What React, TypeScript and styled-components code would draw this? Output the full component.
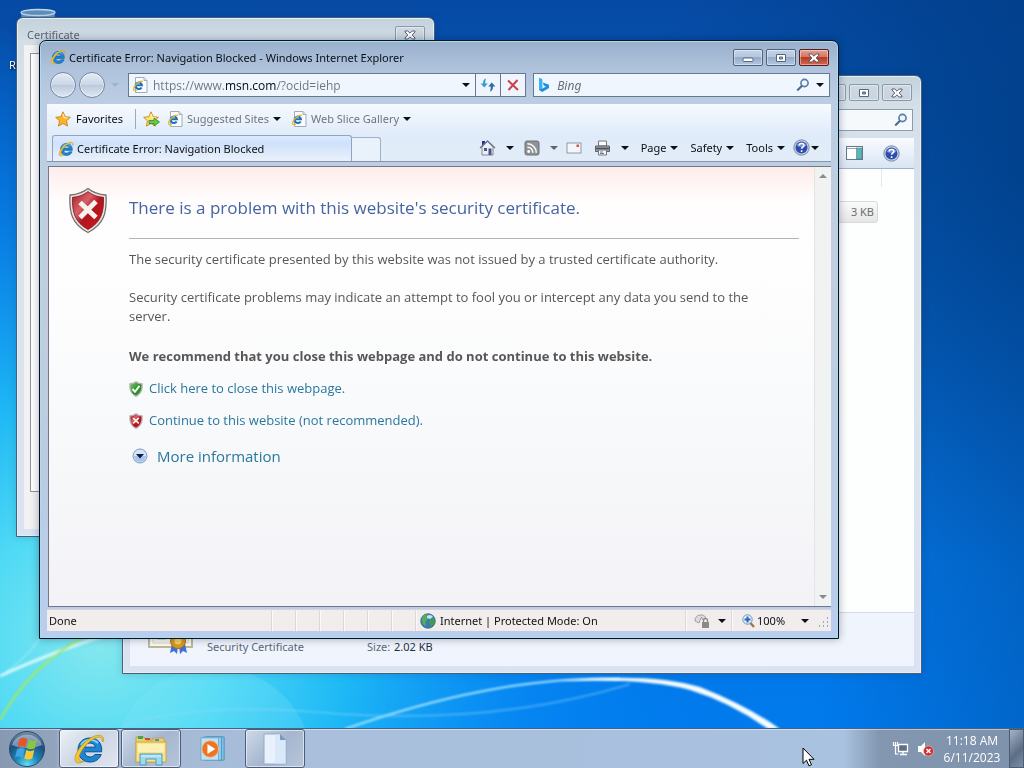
import React from "react";
import styled, { createGlobalStyle, css } from "styled-components";

const Global = createGlobalStyle`
  *, *::before, *::after { box-sizing: border-box; }
  html, body { margin: 0; padding: 0; }
  body { font-family: "Noto Sans", "Open Sans", sans-serif; font-size: 11px; line-height: 16px; color: #111; }
  button, input { font: inherit; color: inherit; }
  svg { display: block; flex: none; }
`;

/* ---------- desktop ---------- */

const Desktop = styled.div`
  position: relative;
  display: flex;
  flex-direction: column;
  min-height: 100vh;
  overflow: hidden;
  background: #0868d0;
`;

const WallpaperSvg = styled.svg`
  position: absolute;
  inset: 0;
  width: 100%;
  height: 100%;
`;

const Workspace = styled.main`
  position: relative;
  flex: 1;
`;

const DesktopIcon = styled.div`
  position: absolute;
  top: 8px;
  left: 1px;
  width: 74px;
  display: flex;
  flex-direction: column;
  align-items: center;
  gap: 1px;
  color: #fff;
  text-shadow: 1px 1px 2px #000;
`;

const reset = css`
  border: 0;
  padding: 0;
  background: none;
  cursor: default;
`;

/* ---------- window frames ---------- */

const Window = styled.section<{ $active?: boolean }>`
  position: absolute;
  display: flex;
  flex-direction: column;
  padding: 0 7px 7px;
  border: 1px solid ${(p) => (p.$active ? "#06131f" : "#46607c")};
  border-radius: 7px 7px 0 0;
  background: ${(p) =>
    p.$active
      ? "linear-gradient(#98afcc 0, #b0c3dc 28px, #bccce3 60px, #c3cfdf 200px, #bccbe0 70%, #b9cdee)"
      : "linear-gradient(#c3d2dc 0, #d3dee7 24px, #d6e1ea 60px, #d9e4ec 50%, #dbe2f2)"};
  box-shadow: inset 0 0 0 1px ${(p) => (p.$active ? "#a9dcf0" : "#e6eef4")},
    0 0 8px rgba(0, 20, 60, ${(p) => (p.$active ? 0.35 : 0.15)});
`;

const CertWindow = styled(Window)`
  top: 17px;
  right: 589px;
  bottom: 191px;
  left: 16px;
`;

const ExplorerWindow = styled(Window)`
  top: 75px;
  right: 102px;
  bottom: 54px;
  left: 122px;
`;

const BrowserWindow = styled(Window)`
  top: 40px;
  right: 185px;
  bottom: 89px;
  left: 39px;
`;

const TitleBar = styled.header<{ $height: number }>`
  display: flex;
  align-items: flex-start;
  gap: 3px;
  height: ${(p) => p.$height}px;
  padding: 8px 2px 0 3px;
`;

const Title = styled.h1<{ $dim?: boolean }>`
  flex: 1;
  margin: 0;
  font-size: 11px;
  font-weight: 400;
  line-height: 18px;
  color: ${(p) => (p.$dim ? "#5b656e" : "#0a0f18")};
`;

const FrameButton = styled.button<{ $kind?: "close" | "faded" }>`
  ${reset}
  display: flex;
  align-items: center;
  justify-content: center;
  width: 30px;
  height: 17px;
  border: 1px solid ${(p) => (p.$kind === "close" ? "#5a1a1e" : p.$kind === "faded" ? "#8a99a9" : "#50627c")};
  border-radius: 2px;
  background: ${(p) =>
    p.$kind === "close"
      ? "linear-gradient(#e3a193 0, #d4735f 48%, #b93a25 50%, #cf6c50)"
      : p.$kind === "faded"
        ? "linear-gradient(#ced9e2, #c8d4de)"
        : "linear-gradient(#c4d3e6 0, #b4c6dd 48%, #95abc8 50%, #b2c8e2)"};
  box-shadow: inset 0 0 0 1px rgba(255, 255, 255, 0.4);
`;

/* ---------- certificate window ---------- */

const CertBody = styled.div`
  flex: 1;
  display: flex;
  padding: 8px 6px 37px;
  background: #f1f2f1;
`;

const CertPanel = styled.div`
  flex: 1;
  border: 1px solid #8f959b;
  background: #fff;
`;

/* ---------- explorer window ---------- */

const SearchRow = styled.div`
  display: flex;
  justify-content: flex-end;
  height: 29px;
  padding-right: 1px;
`;

const ExplorerSearch = styled.label`
  display: flex;
  align-items: center;
  justify-content: flex-end;
  width: 190px;
  height: 22px;
  padding-right: 4px;
  border: 1px solid #8b9db1;
  background: #f5f9fc;
`;

const BareInput = styled.input`
  flex: 1;
  min-width: 0;
  height: 100%;
  padding: 0;
  border: 0;
  outline: 0;
  background: transparent;
`;

const ExplorerTools = styled.div`
  display: flex;
  align-items: center;
  justify-content: flex-end;
  gap: 20px;
  height: 31px;
  padding-right: 14px;
  border-bottom: 1px solid #9fb2cc;
  background: linear-gradient(#f8fbfe 0, #e8f0fa 50%, #d9e4f3);
`;

const FileList = styled.div`
  flex: 1;
  display: flex;
  flex-direction: column;
  align-items: flex-end;
  gap: 14px;
  padding-right: 32px;
  background: #fdfefe;
  border-bottom: 1px solid #d5dbe4;
`;

const ColumnEdge = styled.div`
  width: 1px;
  height: 18px;
  background: #e3e8ee;
`;

const FileSize = styled.div`
  width: 100px;
  height: 22px;
  margin-right: 4px;
  padding-right: 3px;
  border: 1px solid #d9d9d9;
  border-radius: 3px;
  background: linear-gradient(#fafafa, #e6e6e6);
  color: #6d6d6d;
  line-height: 20px;
  text-align: right;
`;

const DetailsPane = styled.footer`
  display: flex;
  align-items: flex-end;
  height: 53px;
  padding: 0 0 4px 18px;
  background: #f0f4fc;
  color: #5a6779;
`;

const DetailText = styled.div<{ $width?: number }>`
  width: ${(p) => (p.$width ? p.$width + "px" : "auto")};
  padding-bottom: 7px;
  white-space: nowrap;

  b {
    font-weight: 400;
    color: #1e2f45;
    margin-left: 1px;
  }
`;

/* ---------- browser ---------- */

const NavRow = styled.div`
  display: flex;
  align-items: center;
  height: 24px;
  margin-bottom: 7px;
  padding: 0 1px 0 3px;
`;

const RoundButton = styled.button`
  ${reset}
  width: 26px;
  height: 26px;
  margin-right: 3px;
  border: 1px solid #77869c;
  border-radius: 50%;
  background: linear-gradient(#e3ebf5 0, #cbd7e7 48%, #b9c8dc 50%, #dfe9f4);
  box-shadow: inset 0 0 0 1px rgba(255, 255, 255, 0.6);
`;

const HistoryButton = styled.button`
  ${reset}
  display: flex;
  width: 8px;
  margin: 0 9px 0 3px;
`;

const AddressBox = styled.div`
  flex: 349;
  display: flex;
  align-items: center;
  height: 24px;
  padding: 0 5px 0 3px;
  gap: 5px;
  border: 1px solid #647892;
  background: #f0f6fd;
`;

const AddressInput = styled(BareInput)`
  font-family: "Open Sans", "Noto Sans", sans-serif;
  font-size: 12px;
  background: linear-gradient(to right, #6c7480 71px, #05080c 71px, #05080c 124px, #6c7480 124px);
  -webkit-background-clip: text;
  background-clip: text;
  -webkit-text-fill-color: transparent;
`;

const NavButton = styled.button`
  ${reset}
  display: flex;
  align-items: center;
  justify-content: center;
  width: 25px;
  height: 24px;
  border: 1px solid #647892;
  border-left: 0;
  background: #eff5fc;
`;

const SearchBox = styled(AddressBox)`
  flex: 296;
  margin-left: 7px;
  gap: 6px;
`;

const SearchInput = styled(BareInput)`
  font-style: italic;
  font-size: 12px;

  &::placeholder {
    color: #6a6f78;
    opacity: 1;
  }
`;

const Chrome = styled.div`
  display: flex;
  flex-direction: column;
  background: linear-gradient(#f6faff 0, #dfebf9 32px, #e3edf9 100%);
`;

const FavoritesBar = styled.nav`
  display: flex;
  align-items: center;
  height: 30px;
  padding-left: 8px;
`;

const BarButton = styled.button<{ $muted?: boolean; $end?: number }>`
  ${reset}
  display: flex;
  align-items: center;
  gap: 4px;
  margin-right: ${(p) => p.$end ?? 10}px;
  color: ${(p) => (p.$muted ? "#71757b" : "#0b0e12")};
  white-space: nowrap;
`;

const Separator = styled.span`
  width: 1px;
  height: 20px;
  margin-right: 7px;
  background: #9fa9b5;
`;

const TabRow = styled.div`
  display: flex;
  align-items: flex-end;
  height: 28px;
  padding-left: 5px;
  border-bottom: 1px solid #8495ae;
`;

const Tab = styled.button`
  ${reset}
  display: flex;
  align-items: center;
  flex: 0 1 300px;
  gap: 3px;
  height: 26px;
  padding-left: 5px;
  border: 1px solid #8fa4c2;
  border-bottom: 0;
  border-radius: 3px 3px 0 0;
  background: linear-gradient(#dceafd, #cfe1fb 30%, #eaf2fc);
  text-align: left;
  white-space: nowrap;
`;

const NewTab = styled.button`
  ${reset}
  width: 29px;
  height: 24px;
  border: 1px solid #9fb0c8;
  border-bottom: 0;
  border-left: 0;
  border-radius: 0 3px 0 0;
  background: #e9f1fb;
`;

const CommandBar = styled.div`
  display: flex;
  align-items: center;
  justify-content: flex-end;
  flex: 1;
  align-self: center;
  padding-right: 12px;
`;

const Caret = styled.span<{ $color?: string }>`
  flex: none;
  border: 4px solid transparent;
  border-top-color: ${(p) => p.$color ?? "#0c1118"};
  border-bottom: 0;
`;

const IconCommand = styled(BarButton)`
  gap: 10px;
`;

const HelpCommand = styled(BarButton)`
  gap: 1px;
`;

const ViewFrame = styled.div`
  flex: 1;
  display: flex;
  min-height: 0;
  margin: 4px 0 0 1px;
  border: 1px solid #6f7a86;
  border-right: 0;
  background: #fff;
`;

const Page = styled.article`
  flex: 1;
  display: grid;
  grid-template-columns: 60px 1fr;
  align-content: start;
  padding: 20px 15px 0 20px;
  background: linear-gradient(#ffecec 0, #fffdfd 34px, #fefefe 100px, #f8f9fb 60%, #f3f3f7);
  color: #575757;
  font-family: "Open Sans", "Noto Sans", sans-serif;
  font-size: 13px;
  line-height: 19px;
`;

const Heading = styled.h2`
  margin: 0;
  padding: 7px 0 16px;
  border-bottom: 1px solid #b4b4b4;
  color: #4465a2;
  font-size: 17px;
  font-weight: 400;
  line-height: 28px;
`;

const Message = styled.div`
  grid-column: 2;
  padding: 11px 20px 0 0;
`;

const Paragraph = styled.p`
  margin: 0 0 19px;
`;

const Advice = styled.h3`
  margin: 0 0 13px;
  padding-top: 2px;
  font-size: 13px;
  line-height: 19px;
`;

const Choice = styled.a<{ $large?: boolean }>`
  display: flex;
  align-items: center;
  gap: ${(p) => (p.$large ? 9 : 6)}px;
  margin-bottom: 13px;
  padding-left: ${(p) => (p.$large ? 3 : 0)}px;
  color: #2a789e;
  font-size: ${(p) => (p.$large ? 15 : 13)}px;
  line-height: ${(p) => (p.$large ? 26 : 19)}px;
  text-decoration: none;
`;

const ScrollTrack = styled.div`
  display: flex;
  flex-direction: column;
  justify-content: space-between;
  align-items: center;
  width: 17px;
  padding: 7px 0;
  border-left: 1px solid #e3e3e3;
  background: #f1f2f2;
`;

const ScrollButton = styled.button<{ $down?: boolean }>`
  ${reset}
  width: 8px;
  height: 4px;
  border: 4px solid transparent;
  ${(p) => (p.$down ? "border-top-color: #8a8a8a; border-bottom: 0;" : "border-bottom-color: #8a8a8a; border-top: 0;")}
`;

const StatusBar = styled.footer`
  display: flex;
  height: 22px;
  margin-top: 2px;
  border-top: 1px solid #d5d5d5;
  background: #f0edec;
  line-height: 22px;
`;

const StatusText = styled.div`
  flex: 1;
  padding-left: 2px;
`;

const StatusCell = styled.div<{ $width: number }>`
  display: flex;
  align-items: center;
  gap: 4px;
  width: ${(p) => p.$width}px;
  padding-left: 4px;
  border-left: 1px solid #dcd8d6;
  box-shadow: inset 1px 0 0 #fbfafa;
`;

const StatusButton = styled(BarButton)`
  margin: 0;
  padding-left: 4px;
  gap: 8px;
`;

const ZoomButton = styled(BarButton)`
  flex: 1;
  gap: 2px;
  margin: 0 6px 0 0;
  padding-left: 6px;

  ${Caret} {
    margin-left: auto;
  }
`;

/* ---------- taskbar ---------- */

const Taskbar = styled.footer`
  position: relative;
  display: flex;
  align-items: stretch;
  height: 40px;
  border-top: 1px solid #3f6685;
  background: linear-gradient(
    to right,
    #8798b1 0,
    #93a4bd 56px,
    #a3b6d0 60px,
    #a9bfdc 320px,
    #a9c2df calc(100% - 180px),
    #8397b0 calc(100% - 145px),
    #7e92ab 100%
  );
  box-shadow: inset 0 1px 0 rgba(255, 255, 255, 0.45);
`;

const StartButton = styled.button`
  ${reset}
  width: 54px;
  margin-right: 5px;
  padding: 1px 0 0 8px;
`;

const TaskButton = styled.button<{ $state?: "front" | "open" }>`
  ${reset}
  display: flex;
  align-items: center;
  justify-content: center;
  width: 60px;
  margin-right: 2px;
  border: 1px solid ${(p) => (p.$state ? "#4b5d78" : "transparent")};
  border-radius: 3px;
  background: ${(p) =>
    p.$state === "front"
      ? "linear-gradient(135deg, #eef1f6, #cbd5e3 50%, #e2e7ef)"
      : p.$state === "open"
        ? "linear-gradient(135deg, #cfdaea, #a5b6ce 50%, #b6c5da)"
        : "none"};
  box-shadow: ${(p) => (p.$state ? "inset 0 0 0 1px rgba(255,255,255,0.55)" : "none")};
`;

const Tray = styled.div`
  display: flex;
  align-items: center;
  gap: 7px;
  margin-left: auto;
  color: #fff;
`;

const Clock = styled.time`
  display: block;
  width: 60px;
  font-family: "Open Sans", "Noto Sans", sans-serif;
  font-size: 12px;
  line-height: 17px;
  text-align: center;
`;

const ShowDesktop = styled.button`
  ${reset}
  align-self: stretch;
  width: 15px;
  border: 1px solid #4c5d72;
  background: linear-gradient(135deg, #a5b3c4, #5c6e86 60%, #7c8da3);
`;

const Pointer = styled.svg`
  position: absolute;
  bottom: 1px;
  right: 209px;
`;

/* ---------- drawings ---------- */

const Wallpaper = () => (
  <WallpaperSvg viewBox="0 0 1024 768" preserveAspectRatio="none" aria-hidden="true">
    <defs>
      <linearGradient id="base" x1="0" y1="0" x2="0" y2="1">
        <stop offset="0" stopColor="#064aa4" />
        <stop offset="0.25" stopColor="#0560c4" />
        <stop offset="0.6" stopColor="#0571dc" />
        <stop offset="1" stopColor="#007cf0" />
      </linearGradient>
      <radialGradient id="glow" gradientUnits="userSpaceOnUse" cx="100" cy="640" r="620">
        <stop offset="0" stopColor="#86e8ee" />
        <stop offset="0.2" stopColor="#50daf5" />
        <stop offset="0.4" stopColor="#20bcf6" stopOpacity="0.95" />
        <stop offset="0.7" stopColor="#0a90f8" stopOpacity="0.5" />
        <stop offset="1" stopColor="#0080f0" stopOpacity="0" />
      </radialGradient>
      <radialGradient id="shade" gradientUnits="userSpaceOnUse" cx="1060" cy="160" r="420">
        <stop offset="0" stopColor="#003a80" stopOpacity="0.75" />
        <stop offset="1" stopColor="#003a80" stopOpacity="0" />
      </radialGradient>
      <linearGradient id="edge" x1="0" y1="0" x2="1" y2="0">
        <stop offset="0.8" stopColor="#003a80" stopOpacity="0" />
        <stop offset="1" stopColor="#003a80" stopOpacity="0.32" />
      </linearGradient>
      <filter id="soft">
        <feGaussianBlur stdDeviation="1" />
      </filter>
    </defs>
    <rect width="1024" height="768" fill="url(#base)" />
    <rect width="1024" height="768" fill="url(#glow)" />
    <rect width="1024" height="768" fill="url(#shade)" />
    <rect width="1024" height="768" fill="url(#edge)" />
    <path d="M120 730 A100 100 0 0 1 306 730 Z" fill="#8ceaf8" opacity="0.2" />
    <g fill="none" filter="url(#soft)">
      <path d="M0 676 Q45 655 100 637" stroke="#d4f8fa" strokeWidth="3" />
      <path d="M0 676 Q25 660 40 638" stroke="#b8f4f8" strokeWidth="1" />
      <path d="M0 720 Q30 665 86 636" stroke="#a4e860" strokeWidth="2" />
      <path d="M120 728 Q190 700 340 714 Q500 724 630 684" stroke="#8fdcfc" strokeWidth="2" opacity="0.4" />
      <path d="M345 729 Q500 675 620 679" stroke="#a8e4fe" strokeWidth="2" />
    </g>
    <path d="M560 681 Q650 672 700 687 Q748 706 780 729 L768 729 Q730 702 690 690 Q650 678 560 681Z" fill="#f4fcff" filter="url(#soft)" />
  </WallpaperSvg>
);

const IELogo = ({ size = 16 }: { size?: number }) => (
  <svg width={size} height={size} viewBox="0 0 32 32" aria-hidden="true">
    <path
      d="M17 5C9.500 5 5 10 5 17s5 12 12 12c5.500 0 9.600-3 11.200-7.500h-6.400c-1 1.700-2.600 2.500-4.700 2.500-3.200 0-5.300-2-5.500-5.200h17C29.300 10.500 25 5 17 5zm-5.300 9.200C12.200 11.500 14.200 10 17 10c2.900 0 4.900 1.500 5.300 4.200z"
      fill="#1e86d0"
      stroke="#0b4f94"
      strokeWidth="1"
    />
    <path d="M8 12C11 6 20 5 25 10" fill="none" stroke="#7fd0f5" strokeWidth="2" />
    <path
      d="M30.500 8.500C31.500 2 26 .5 19 4.200 11 8.500 2.500 18 2 25.500 1.700 31 6.500 31 12 28c-4 1-6.500 0-6-3.500C6.800 18.500 13.500 10 20.500 6c5-3 9-2.500 8.500 2z"
      fill="#f6c62e"
      stroke="#b88a14"
      strokeWidth="0.6"
    />
  </svg>
);

const PageIcon = () => (
  <svg width="16" height="16" viewBox="0 0 16 16" aria-hidden="true">
    <path d="M3.500.5h8.500l3 3v12H3.500z" fill="#fdfdfd" stroke="#a3acb8" />
    <path d="M12 .5v3h3" fill="#dfe5ec" stroke="#a3acb8" />
    <path
      d="M9.600 10.400a3.200 3.200 0 1 1 .4-2.100H4.200"
      fill="none"
      stroke="#1d72be"
      strokeWidth="2"
    />
    <path d="M11 4.500C9 3 2.500 7.500 1.500 12c-.3 2 1.500 2.200 3.500 1.200" fill="none" stroke="#e8b92c" strokeWidth="1.200" />
  </svg>
);

const Star = ({ add }: { add?: boolean }) => (
  <svg width="17" height="16" viewBox="0 0 17 16" aria-hidden="true">
    <path
      d="M8 .8l2.200 4.900 5.200.6-3.900 3.500 1.100 5.300L8 12.500l-4.600 2.600 1.100-5.300L.6 6.300l5.200-.6z"
      fill={add ? "#ffe27a" : "#fbb52c"}
      stroke="#cc8411"
      strokeWidth="0.900"
      strokeLinejoin="round"
    />
    <path d="M8 3l1.200 3.600 3.300.4" fill="none" stroke="#fff1b8" strokeWidth="1.200" />
    {add && <path d="M6 9.500h5V7l5.500 4-5.500 4v-2.500H6z" fill="#6cc84a" stroke="#2f8a25" strokeWidth="0.800" />}
  </svg>
);

const Bing = () => (
  <svg width="14" height="16" viewBox="0 0 14 16" aria-hidden="true">
    <path d="M2 1l3.200 1.200v9.600L9 9.600 6.800 8.500 5.800 5.500 12 7.700v3.200L5.200 15 2 13z" fill="#1b8ee0" />
    <path d="M2 1l3.200 1.200v9.600L2 13z" fill="#38b2f0" />
  </svg>
);

const Refresh = () => (
  <svg width="16" height="14" viewBox="0 0 16 14" aria-hidden="true">
    <path d="M6 .5C3.800 1 3 2.800 3 5.500H.6l3.700 4 3.500-4H5.300c0-2 .1-3.500.7-5z" fill="#3b9dcb" />
    <path d="M10 13.500c2.200-.5 3-2.300 3-5h2.400l-3.700-4-3.500 4h2.500c0 2-.1 3.500-.7 5z" fill="#2d6aa8" />
  </svg>
);

const Stop = () => (
  <svg width="14" height="14" viewBox="0 0 14 14" aria-hidden="true">
    <path d="M2 2.500l10 9.500M11.500 2L2.500 12" stroke="#c8414c" strokeWidth="2" />
  </svg>
);

const Magnifier = () => (
  <svg width="14" height="14" viewBox="0 0 14 14" aria-hidden="true">
    <circle cx="8.500" cy="5" r="3.600" fill="#eef5fb" stroke="#547ca4" strokeWidth="1.600" />
    <path d="M6 7.800L1.200 12.500" stroke="#456a92" strokeWidth="2" />
  </svg>
);

const Glyph = ({ kind }: { kind: "min" | "max" | "close" }) => (
  <svg width="14" height="12" viewBox="0 0 14 12" aria-hidden="true">
    {kind === "min" && <rect x="2" y="6" width="10" height="3.500" rx="1" fill="#fff" stroke="#56667e" />}
    {kind === "max" && (
      <g fill="#fff" stroke="#56667e">
        <path d="M2.500 2.500h9v7h-9z" />
        <path d="M5.500 5h3v2h-3z" fill="#9fb2cc" />
      </g>
    )}
    {kind === "close" && (
      <path
        d="M2 2h2.800L7 4.200 9.200 2H12v1L9.200 6 12 9v1H9.200L7 7.800 4.800 10H2V9l2.800-3L2 3z"
        fill="#fff"
        stroke="#4a4f62"
        strokeWidth="0.900"
      />
    )}
  </svg>
);

const Home = () => (
  <svg width="17" height="17" viewBox="0 0 17 17" aria-hidden="true">
    <path d="M3 2h3v4L3 8z" fill="#2a2f9c" />
    <path d="M3 8l5.500-5.500L14 8v8H3z" fill="#eceff3" stroke="#68717e" strokeWidth="0.800" />
    <path d="M1 9l7.500-7L16 9" fill="none" stroke="#6f7a88" strokeWidth="1.500" />
    <path d="M5 9h3v3H5zM9.500 9.500h3V16h-3z" fill="#4c5788" />
  </svg>
);

const Feed = () => (
  <svg width="16" height="16" viewBox="0 0 16 16" aria-hidden="true">
    <rect x="1" y="1" width="14" height="14" rx="2" fill="#909396" stroke="#6d7073" />
    <circle cx="4.700" cy="11.500" r="1.400" fill="#fff" />
    <path d="M3.500 7.200a5.200 5.200 0 0 1 5.300 5.500M3.500 3.800a8.800 8.800 0 0 1 8.800 8.900" fill="none" stroke="#fff" strokeWidth="1.500" />
  </svg>
);

const Mail = () => (
  <svg width="16" height="16" viewBox="0 0 16 16" aria-hidden="true">
    <rect x="1" y="3" width="14" height="10" fill="#f5f6f9" stroke="#9098a8" />
    <path d="M10.500 4.500h2.500v2.500h-2.500z" fill="#d8504c" />
  </svg>
);

const Printer = () => (
  <svg width="17" height="16" viewBox="0 0 17 16" aria-hidden="true">
    <path d="M4.500 1h8v5h-8z" fill="#fafafa" stroke="#73777c" />
    <path d="M1.500 6h14v5.500h-14z" fill="#9a9fa5" stroke="#5e6368" />
    <path d="M2 8.500h13" stroke="#4b4f54" strokeWidth="1.500" />
    <path d="M4.500 10h8v5h-8z" fill="#f6f8fa" stroke="#73777c" />
    <path d="M6 12h3M6 13.500h4" stroke="#4a5a6c" strokeWidth="0.800" />
  </svg>
);

const Help = () => (
  <svg width="17" height="17" viewBox="0 0 17 17" aria-hidden="true">
    <circle cx="8.500" cy="8.500" r="7.700" fill="#c6cfe2" stroke="#7d8aa8" />
    <circle cx="8.500" cy="8.500" r="6" fill="#2c4cae" />
    <path d="M3.500 6.500a5.500 5 0 0 1 10 0c-3 2-7 2-10 0z" fill="#6f8bd4" />
    <path d="M6.200 6.500C6.300 3.800 11 3.900 10.900 6.400c-.1 1.700-2.300 1.600-2.300 3.300M8.600 11.300v1.600" fill="none" stroke="#fff" strokeWidth="1.600" />
  </svg>
);

const PreviewPane = () => (
  <svg width="17" height="15" viewBox="0 0 17 15" aria-hidden="true">
    <rect x="0.500" y="0.500" width="16" height="13" fill="#fff" stroke="#66788c" />
    <path d="M1 2.500h15" stroke="#93a4b5" />
    <rect x="10.500" y="2" width="5.500" height="11" fill="#5fb4b4" stroke="#4b7f8c" strokeWidth="0.600" />
  </svg>
);

const Shield = ({ ok, width, height }: { ok?: boolean; width: number; height: number }) => (
  <svg width={width} height={height} viewBox="0 0 38 46" aria-hidden="true">
    <defs>
      <linearGradient id={ok ? "sg" : "sr"} x1="0" y1="0" x2="1" y2="1">
        <stop offset="0" stopColor={ok ? "#7cc870" : "#a61c22"} />
        <stop offset="0.35" stopColor={ok ? "#46a53e" : "#d8606a"} />
        <stop offset="0.55" stopColor={ok ? "#1f8a20" : "#b01520"} />
        <stop offset="1" stopColor={ok ? "#3aa838" : "#d41616"} />
      </linearGradient>
    </defs>
    <path d="M19 1c6 5 11 6 18 6.500C38 25 35 37 19 45 3 37 0 25 1 7.500 8 7 13 6 19 1z" fill="#e9e5e4" stroke="#77706f" strokeWidth="1.300" />
    <path d="M19 4c5 4 10 5.200 15.500 5.800C35 25 32 35 19 42 6 35 3 25 3.500 9.800 9 9.200 14 8 19 4z" fill={ok ? "url(#sg)" : "url(#sr)"} stroke={ok ? "#2c6e2c" : "#7e1418"} strokeWidth="0.800" />
    {ok ? (
      <path d="M9 23l7 8 13-17" fill="none" stroke="#fff" strokeWidth="5.500" />
    ) : (
      <path d="M11 15l16 15M27 14L11 30" fill="none" stroke="#f7f3ec" strokeWidth="5" />
    )}
  </svg>
);

const Expand = () => (
  <svg width="16" height="16" viewBox="0 0 16 16" aria-hidden="true">
    <circle cx="8" cy="8" r="7" fill="#d5e4f6" stroke="#7f9cc4" />
    <path d="M2 8a6 6 0 0 0 12 0z" fill="#a9c6ea" />
    <path d="M4 6h8L8 10.500z" fill="#101c46" />
  </svg>
);

const Globe = () => (
  <svg width="16" height="16" viewBox="0 0 16 16" aria-hidden="true">
    <circle cx="8" cy="8" r="7.300" fill="#3c78bd" stroke="#3f5b78" strokeWidth="0.700" />
    <path d="M2 4c2-3 5-3 6-2.500L6.500 4 8 6 5.500 9 6 13c-3-1-5-4-4-9z" fill="#4fae57" />
    <path d="M10 6l4-1c1.500 4 0 7-3 9l-2-4z" fill="#3f9c4c" />
    <path d="M7 3c2-2 5-1 6 1L10 6 7 5z" fill="#bfe4f6" />
  </svg>
);

const Lock = () => (
  <svg width="16" height="16" viewBox="0 0 16 16" aria-hidden="true">
    <path d="M1 8a6 6 0 0 1 11-3.500L9 7 7.500 4 5 10z" fill="#dcdcdc" stroke="#8e8e8e" strokeWidth="0.800" />
    <rect x="8" y="9" width="7" height="6" fill="#8a8a8a" />
    <path d="M9.500 9V7.500a2 2 0 0 1 4 0V9" fill="none" stroke="#8a8a8a" strokeWidth="1.300" />
  </svg>
);

const Zoom = () => (
  <svg width="13" height="14" viewBox="0 0 13 14" aria-hidden="true">
    <path d="M8 8.500l4 4.500" stroke="#a0764a" strokeWidth="2.400" />
    <circle cx="5.500" cy="5.500" r="4.700" fill="#e6f0fb" stroke="#6d92c6" />
    <path d="M2.500 5.500h6M5.500 2.500v6" stroke="#2c64b8" strokeWidth="2" />
  </svg>
);

const Grip = () => (
  <svg width="12" height="14" viewBox="0 0 12 14" aria-hidden="true">
    <path d="M8 3h1v2H8zM8 7h1v2H8zM8 11h1v2H8zM4 7h1v2H4zM4 11h1v2H4zM0 11h1v2H0z" fill="#a4a8b4" />
  </svg>
);

const CertificateIcon = () => (
  <svg width="46" height="34" viewBox="0 0 46 34" aria-hidden="true">
    <rect x="1" y="1" width="43" height="25" fill="#fbfaf1" stroke="#bdb998" strokeWidth="2" />
    <path d="M5 5h35v17H5z" fill="none" stroke="#ddd9c0" />
    <path d="M9 15h13M9 18h9" stroke="#b9b9b9" />
    <path d="M24 23l-2 9 4-2 3 3 1-8zM37 23l2 9-4-2-3 3-1-8z" fill="#3f6fe0" />
    <circle cx="30" cy="20" r="7.500" fill="#d99a1c" stroke="#a8740c" />
    <circle cx="30" cy="20" r="3.500" fill="#f6cf5c" />
  </svg>
);

const RecycleBin = () => (
  <svg width="40" height="48" viewBox="0 0 40 48" aria-hidden="true">
    <path d="M3 5l4 40h26l4-40z" fill="#9fc0dc" opacity="0.6" />
    <ellipse cx="20" cy="4.500" rx="17" ry="3" fill="#5f92be" stroke="#c4d8ea" strokeWidth="1.300" />
  </svg>
);

const StartOrb = () => (
  <svg width="38" height="38" viewBox="0 0 38 38" aria-hidden="true">
    <defs>
      <radialGradient id="orb" cx="0.500" cy="0.950" r="0.950">
        <stop offset="0" stopColor="#5fe0f4" />
        <stop offset="0.35" stopColor="#1b86b8" />
        <stop offset="0.7" stopColor="#1f4d7c" />
        <stop offset="1" stopColor="#7a93ac" />
      </radialGradient>
    </defs>
    <circle cx="19" cy="19" r="17.500" fill="url(#orb)" stroke="#2a4b6c" />
    <path d="M4 15a15.500 14 0 0 1 30 0c-9 4-21 4-30 0z" fill="#dfe9f2" opacity="0.450" />
    <path d="M11.500 9q4-2.500 7.800 0l-2 8.500q-4-2.300-7.800 0z" fill="#e8552a" />
    <path d="M20.800 9.800q4 2.300 8 0l-2 8.400q-4 2.300-8 0z" fill="#8cc63e" />
    <path d="M9 19.200q4-2.300 7.800 0l-2 8.500q-4-2.300-7.800 0z" fill="#3fa3e4" />
    <path d="M18.300 20q4 2.300 8 0l-2 8.400q-4 2.300-8 0z" fill="#fbc92f" />
  </svg>
);

const Folder = () => (
  <svg width="34" height="34" viewBox="0 0 34 34" aria-hidden="true">
    <path d="M2 5h8l2 3h7V6h10l2 3v21H2z" fill="#ecd06c" stroke="#c0a24a" />
    <path d="M4 4h5v3H4z" fill="#3fa457" />
    <path d="M11 6h5v2h-5z" fill="#cf4a35" />
    <path d="M21 7h4v2h-4z" fill="#4e8fd2" />
    <path d="M2 10h30v20H2z" fill="#f8e28c" stroke="#c8a94a" />
    <path d="M4 12h26v8H4z" fill="#fcf0b4" />
    <path d="M6 33V22h22v11h-6v-6H12v6z" fill="#9ddaf2" stroke="#4b9cc4" />
    <path d="M7 24h20" stroke="#dff4fc" />
  </svg>
);

const MediaPlayer = () => (
  <svg width="26" height="26" viewBox="0 0 28 28" aria-hidden="true">
    <path d="M7 1h19v25H7z" fill="#7fc0e4" stroke="#4a91bd" />
    <path d="M4 1h19v25H4z" fill="#9ed2ef" stroke="#4a91bd" />
    <path d="M1 2h19v24H1z" fill="#c1e2f5" stroke="#6aa9cf" />
    <circle cx="11" cy="14" r="9" fill="#ec7424" stroke="#f7b98a" />
    <path d="M8 8.500l8.500 5.500L8 19.500z" fill="#fff" />
  </svg>
);

const Document = () => (
  <svg width="26" height="32" viewBox="0 0 26 32" aria-hidden="true">
    <path d="M2 1h16l6 6v24H2z" fill="#e9f2fc" stroke="#92aac6" />
    <path d="M13 1h5l6 6v24H13z" fill="#cfe2f7" opacity="0.600" />
    <path d="M18 1v6h6z" fill="#7c9abe" />
  </svg>
);

const Network = () => (
  <svg width="18" height="16" viewBox="0 0 18 16" aria-hidden="true">
    <path d="M6.500 3.500h9v7h-9z" fill="#5e6f86" stroke="#fff" strokeWidth="1.300" />
    <path d="M8 13.500h7M11 10v3" stroke="#fff" strokeWidth="1.300" />
    <path d="M1.500 1v3.500h4V1M3.500 1v3M3.500 5v8h3" fill="none" stroke="#fff" strokeWidth="1.200" />
  </svg>
);

const Muted = () => (
  <svg width="18" height="16" viewBox="0 0 18 16" aria-hidden="true">
    <path d="M1 5h3l4-4v14l-4-4H1z" fill="#fff" />
    <circle cx="11.500" cy="10" r="5" fill="#d02c2c" stroke="#f0b4b0" strokeWidth="0.700" />
    <path d="M9.500 8l4 4M13.500 8l-4 4" stroke="#fff" strokeWidth="1.600" />
  </svg>
);

/* ---------- screens ---------- */

const Certificate = () => (
  <CertWindow aria-label="Certificate">
    <TitleBar $height={27}>
      <Title $dim>Certificate</Title>
      <FrameButton $kind="faded" aria-label="Close"><Glyph kind="close" /></FrameButton>
    </TitleBar>
    <CertBody><CertPanel /></CertBody>
  </CertWindow>
);

const Explorer = () => (
  <ExplorerWindow aria-label="File explorer">
    <TitleBar $height={33}>
      <Title />
      <FrameButton $kind="faded" aria-label="Minimize"><Glyph kind="min" /></FrameButton>
      <FrameButton $kind="faded" aria-label="Maximize"><Glyph kind="max" /></FrameButton>
      <FrameButton $kind="faded" aria-label="Close"><Glyph kind="close" /></FrameButton>
    </TitleBar>
    <SearchRow>
      <ExplorerSearch>
        <BareInput aria-label="Search files" />
        <Magnifier />
      </ExplorerSearch>
    </SearchRow>
    <ExplorerTools><PreviewPane /><Help /></ExplorerTools>
    <FileList>
      <ColumnEdge />
      <FileSize>3 KB</FileSize>
    </FileList>
    <DetailsPane>
      <DetailText $width={59}><CertificateIcon /></DetailText>
      <DetailText $width={160}>Security Certificate</DetailText>
      <DetailText>Size: <b>2.02 KB</b></DetailText>
    </DetailsPane>
  </ExplorerWindow>
);

const Browser = () => (
  <BrowserWindow $active aria-label="Internet Explorer">
    <TitleBar $height={32}>
      <IELogo />
      <Title>Certificate Error: Navigation Blocked - Windows Internet Explorer</Title>
      <FrameButton aria-label="Minimize"><Glyph kind="min" /></FrameButton>
      <FrameButton aria-label="Maximize"><Glyph kind="max" /></FrameButton>
      <FrameButton $kind="close" aria-label="Close"><Glyph kind="close" /></FrameButton>
    </TitleBar>
    <NavRow>
      <RoundButton aria-label="Back" />
      <RoundButton aria-label="Forward" />
      <HistoryButton aria-label="Recent pages"><Caret $color="#9db4d2" /></HistoryButton>
      <AddressBox>
        <PageIcon />
        <AddressInput aria-label="Address" defaultValue="https://www.msn.com/?ocid=iehp" />
        <Caret />
      </AddressBox>
      <NavButton aria-label="Refresh"><Refresh /></NavButton>
      <NavButton aria-label="Stop"><Stop /></NavButton>
      <SearchBox>
        <Bing />
        <SearchInput aria-label="Search" placeholder="Bing" />
        <Magnifier />
        <Caret />
      </SearchBox>
    </NavRow>
    <Chrome>
      <FavoritesBar>
        <BarButton $end={12}><Star />Favorites</BarButton>
        <Separator />
        <BarButton $end={7} aria-label="Add to favorites"><Star add /></BarButton>
        <BarButton $muted><PageIcon />Suggested Sites<Caret /></BarButton>
        <BarButton $muted><PageIcon />Web Slice Gallery<Caret /></BarButton>
      </FavoritesBar>
      <TabRow>
        <Tab><IELogo />Certificate Error: Navigation Blocked</Tab>
        <NewTab aria-label="New tab" />
        <CommandBar>
          <IconCommand aria-label="Home"><Home /><Caret /></IconCommand>
          <IconCommand $end={8} aria-label="Feeds"><Feed /><Caret $color="#5a6470" /></IconCommand>
          <IconCommand $end={12} aria-label="Read mail"><Mail /></IconCommand>
          <IconCommand $end={12} aria-label="Print"><Printer /><Caret /></IconCommand>
          <BarButton $end={12}>Page<Caret /></BarButton>
          <BarButton $end={12}>Safety<Caret /></BarButton>
          <BarButton $end={8}>Tools<Caret /></BarButton>
          <HelpCommand $end={0} aria-label="Help"><Help /><Caret /></HelpCommand>
        </CommandBar>
      </TabRow>
    </Chrome>
    <ViewFrame>
      <Page>
        <Shield width={38} height={47} />
        <Heading>There is a problem with this website's security certificate.</Heading>
        <Message>
          <Paragraph>
            The security certificate presented by this website was not issued by a trusted certificate authority.
          </Paragraph>
          <Paragraph>
            Security certificate problems may indicate an attempt to fool you or intercept any data you send to the
            server.
          </Paragraph>
          <Advice>We recommend that you close this webpage and do not continue to this website.</Advice>
          <Choice href="#close"><Shield ok width={14} height={16} />Click here to close this webpage.</Choice>
          <Choice href="#continue"><Shield width={14} height={16} />Continue to this website (not recommended).</Choice>
          <Choice $large href="#more"><Expand />More information</Choice>
        </Message>
      </Page>
      <ScrollTrack>
        <ScrollButton aria-label="Scroll up" />
        <ScrollButton $down aria-label="Scroll down" />
      </ScrollTrack>
    </ViewFrame>
    <StatusBar>
      <StatusText>Done</StatusText>
      {[0, 1, 2, 3, 4, 5].map((n) => (
        <StatusCell key={n} $width={24} />
      ))}
      <StatusCell $width={270}><Globe />Internet | Protected Mode: On</StatusCell>
      <StatusCell $width={46}><StatusButton aria-label="Security report"><Lock /><Caret /></StatusButton></StatusCell>
      <StatusCell $width={100}>
        <ZoomButton><Zoom />100%<Caret /></ZoomButton>
        <Grip />
      </StatusCell>
    </StatusBar>
  </BrowserWindow>
);

export default function App() {
  return (
    <>
      <Global />
      <Desktop>
        <Wallpaper />
        <Workspace>
          <DesktopIcon><RecycleBin />Recycle Bin</DesktopIcon>
          <Explorer />
          <Certificate />
          <Browser />
        </Workspace>
        <Taskbar>
          <StartButton aria-label="Start"><StartOrb /></StartButton>
          <TaskButton $state="front" aria-label="Internet Explorer"><IELogo size={32} /></TaskButton>
          <TaskButton $state="open" aria-label="Windows Explorer"><Folder /></TaskButton>
          <TaskButton aria-label="Windows Media Player"><MediaPlayer /></TaskButton>
          <TaskButton $state="open" aria-label="Document"><Document /></TaskButton>
          <Tray>
            <Network />
            <Muted />
            <Clock>11:18 AM<br />6/11/2023</Clock>
            <ShowDesktop aria-label="Show desktop" />
          </Tray>
          <Pointer width="13" height="20" viewBox="0 0 13 20" aria-hidden="true">
            <path d="M1 1v15.500l3.500-3.300 2.500 5.600 2.500-1.100L7 12.300h5z" fill="#fff" stroke="#000" />
          </Pointer>
        </Taskbar>
      </Desktop>
    </>
  );
}
